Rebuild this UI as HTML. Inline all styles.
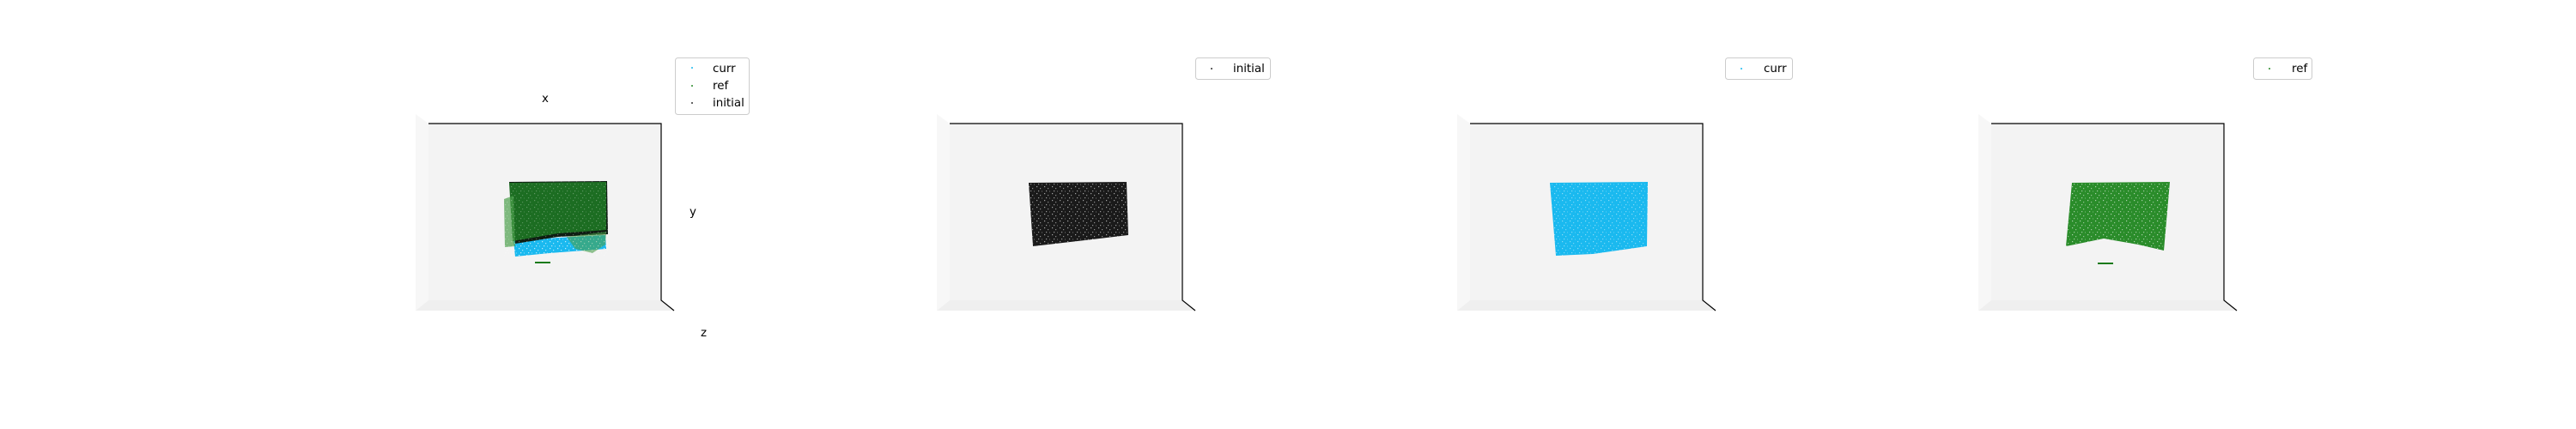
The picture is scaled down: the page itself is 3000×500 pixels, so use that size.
<!DOCTYPE html>
<html><head><meta charset="utf-8"><style>
html,body{margin:0;padding:0;background:#fff;width:3000px;height:500px;overflow:hidden}
svg{display:block}
text{font-family:"DejaVu Sans","Liberation Sans",sans-serif;font-size:13.4px;fill:#000}
</style></head><body>
<svg width="3000" height="500" xmlns="http://www.w3.org/2000/svg">
<defs>
<pattern id="nz" width="9" height="8" patternUnits="userSpaceOnUse">
<rect x="1" y="1" width="1.2" height="1.2" fill="#fff" opacity=".6"/>
<rect x="5" y="3" width="1.2" height="1.2" fill="#fff" opacity=".5"/>
<rect x="3" y="6" width="1.2" height="1.2" fill="#fff" opacity=".55"/>
<rect x="7" y="6.5" width="1" height="1" fill="#fff" opacity=".4"/>
</pattern>
<g id="pane">
<polygon points="484,133 499,144 499,350 484,362" fill="#f7f7f7"/>
<polygon points="484,362 499,350 770,350 785,362" fill="#efefef"/>
<rect x="499" y="144" width="271" height="206" fill="#f3f3f3"/>
<polyline points="499,144 770,144 770,350 785,362" fill="none" stroke="#000" stroke-width="1.2"/>
</g>
</defs>

<!-- Panel 1 -->
<use href="#pane"/>
<polygon points="598,280 705,274 706,290 640,295 600,299" fill="#1ab9ef"/>
<polygon points="598,280 705,274 706,290 640,295 600,299" fill="url(#nz)"/>
<polygon points="593,212 707,211 708,273 650,276 600,284" fill="#0e1d12"/>
<polygon points="593,213 706,212 706,268 650,272 597,281" fill="#1c6d22"/>
<polygon points="587,232 598,228 600,287 588,288" fill="#4a9e4a" opacity=".7"/>
<polygon points="660,276 706,270 705,285 690,295 670,290" fill="#4a9e4a" opacity=".6"/>
<polygon points="587,212 708,211 708,299 587,299" fill="url(#nz)" opacity=".5"/>
<rect x="623" y="305" width="18" height="2" fill="#1a7a1a"/>
<rect x="786.5" y="67.5" width="86" height="66" rx="3" fill="#fff" stroke="#ccc"/>
<circle cx="806" cy="79" r="1" fill="#1ab9ef"/>
<circle cx="806" cy="100" r="1" fill="#2a8a2a"/>
<circle cx="806" cy="120" r="1" fill="#333"/>
<text x="830" y="84">curr</text>
<text x="830" y="104">ref</text>
<text x="830" y="124">initial</text>
<text x="631" y="119">x</text>
<text x="803" y="251">y</text>
<text x="816" y="392">z</text>

<!-- Panel 2 -->
<g transform="translate(607,0)"><use href="#pane"/></g>
<polygon points="1198,213 1312,212 1314,274 1255,281 1203,287" fill="#1a1a1a"/>
<polygon points="1198,213 1312,212 1314,274 1255,281 1203,287" fill="url(#nz)"/>
<rect x="1392.5" y="67.5" width="87" height="25" rx="3" fill="#fff" stroke="#ccc"/>
<circle cx="1411" cy="80" r="1" fill="#333"/>
<text x="1436" y="84">initial</text>

<!-- Panel 3 -->
<g transform="translate(1213,0)"><use href="#pane"/></g>
<polygon points="1805,213 1919,212 1918,287 1855,296 1812,298" fill="#1ab9ef"/>
<polygon points="1805,213 1919,212 1918,287 1855,296 1812,298" fill="url(#nz)" opacity=".8"/>
<rect x="2009.5" y="67.5" width="78" height="25" rx="3" fill="#fff" stroke="#ccc"/>
<circle cx="2028" cy="80" r="1" fill="#1ab9ef"/>
<text x="2054" y="84">curr</text>

<!-- Panel 4 -->
<g transform="translate(1820,0)"><use href="#pane"/></g>
<polygon points="2413,213 2527,212 2520,292 2490,285 2450,278 2406,287" fill="#2a8c2a"/>
<polygon points="2413,213 2527,212 2520,292 2490,285 2450,278 2406,287" fill="url(#nz)"/>
<rect x="2443" y="306" width="18" height="2" fill="#1a7a1a"/>
<rect x="2624.5" y="67.5" width="68" height="25" rx="3" fill="#fff" stroke="#ccc"/>
<circle cx="2643" cy="80" r="1" fill="#2a8a2a"/>
<text x="2669" y="84">ref</text>
</svg>
</body></html>
